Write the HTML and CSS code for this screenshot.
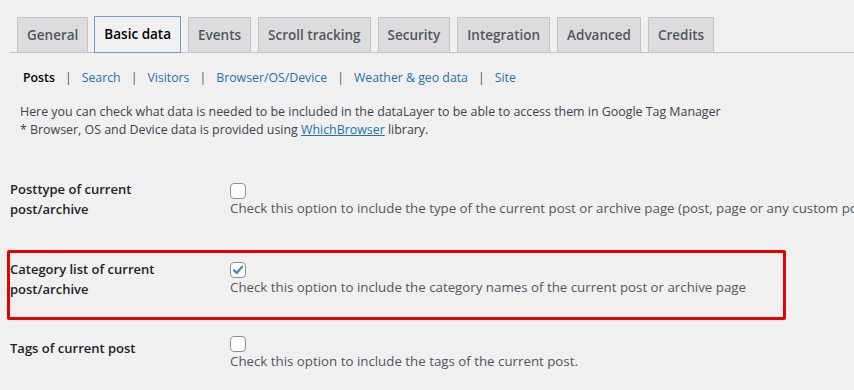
FILE: index.html
```html
<!DOCTYPE html>
<html lang="en">
<head>
    <meta charset="UTF-8">
    <meta name="viewport" content="width=device-width, initial-scale=1.0">
    <title>Basic data</title>
    <link rel="stylesheet" href="styles.css">
</head>
<body>
    <div class="wrap">
        <nav class="tabs">
            <a class="tab" href="#">General</a>
            <a class="tab active" href="#">Basic data</a>
            <a class="tab" href="#">Events</a>
            <a class="tab" href="#">Scroll tracking</a>
            <a class="tab" href="#">Security</a>
            <a class="tab" href="#">Integration</a>
            <a class="tab" href="#">Advanced</a>
            <a class="tab" href="#">Credits</a>
        </nav>

        <ul class="subnav">
            <li><a class="current" href="#">Posts</a></li>
            <li><a href="#">Search</a></li>
            <li><a href="#">Visitors</a></li>
            <li><a href="#">Browser/OS/Device</a></li>
            <li><a href="#">Weather &amp; geo data</a></li>
            <li><a href="#">Site</a></li>
        </ul>

        <p class="intro">
            Here you can check what data is needed to be included in the dataLayer to be able to access them in Google Tag Manager<br>
            * Browser, OS and Device data is provided using <a href="#">WhichBrowser</a> library.
        </p>

        <div class="options">
            <div class="row row-first">
                <div class="label">Posttype of current<br>post/archive</div>
                <div class="field">
                    <span class="box"></span>
                    <div class="desc">Check this option to include the type of the current post or archive page (post, page or any custom post type)</div>
                </div>
            </div>

            <div class="row row-marked">
                <div class="label">Category list of current<br>post/archive</div>
                <div class="field">
                    <span class="box">
                        <svg viewBox="0 0 16 16" width="14" height="14"><path d="M3.3 8.2 L6.6 11.4 L12.8 4.2" fill="none" stroke="#3582c4" stroke-width="2.4" stroke-linecap="round" stroke-linejoin="round"/></svg>
                    </span>
                    <div class="desc">Check this option to include the category names of the current post or archive page</div>
                </div>
            </div>

            <div class="row row-last">
                <div class="label">Tags of current post</div>
                <div class="field">
                    <span class="box"></span>
                    <div class="desc">Check this option to include the tags of the current post.</div>
                </div>
            </div>
        </div>
    </div>
</body>
</html>
```

FILE: styles.css
```css
body {
    margin: 0;
    background-color: #f0f0f1;
    font-family: "Open Sans", "Noto Sans", sans-serif;
    color: #3c434a;
    overflow: hidden;
}
.wrap {
    padding: 17px 0 0 10px;
}
.tabs {
    display: flex;
    align-items: flex-end;
    border-bottom: 1px solid #c3c4c7;
}
.tab {
    margin-left: 7px;
    padding: 5px 9px;
    font-size: 13.5px;
    font-weight: 600;
    line-height: 24px;
    color: #50575e;
    text-decoration: none;
    background-color: #dcdcde;
    border: 1px solid #c3c4c7;
    border-bottom: none;
}
.tab.active {
    color: #000;
    background-color: #f0f0f1;
    border: 1px solid #6f9bd1;
    margin-top: -1px;
    margin-bottom: -1px;
    margin-left: 6px;
    padding: 5px 9px 6px;
    position: relative;
}
.subnav {
    list-style: none;
    display: flex;
    margin: 16px 0 0 13px;
    padding: 0;
    font-size: 12.3px;
    line-height: 18px;
}
.subnav li + li::before {
    content: "|";
    color: #50575e;
    padding: 0 10px 0 10px;
}
.subnav a {
    color: #2271b1;
    text-decoration: none;
}
.subnav a.current {
    color: #000;
    font-weight: 600;
}
.intro {
    margin: 16px 0 0 10px;
    font-size: 12.4px;
    line-height: 18px;
}
.intro a {
    color: #2271b1;
}
.options {
    margin-top: 40px;
    font-size: 13px;
}
.row {
    display: grid;
    grid-template-columns: 220px auto;
    white-space: nowrap;
}
.label {
    font-weight: 600;
    line-height: 20px;
    color: #1d2327;
}
.box {
    display: flex;
    align-items: center;
    justify-content: center;
    width: 14px;
    height: 14px;
    background-color: #fff;
    border: 1px solid #8c8f94;
    border-radius: 4px;
}
.desc {
    font-size: 13.3px;
    line-height: 18px;
    color: #50575e;
}
.row-first .box {
    margin-top: 4px;
}
.row-marked {
    width: 773px;
    margin: 31px 0 0 -3px;
    padding: 6px 0 18px 0;
    border: 3px solid #e60000;
    border-radius: 2px;
}
.row-marked .box {
    margin-top: 3px;
}
.row-last {
    margin-top: 16px;
}
.row-last .label {
    padding-top: 2px;
}
```
